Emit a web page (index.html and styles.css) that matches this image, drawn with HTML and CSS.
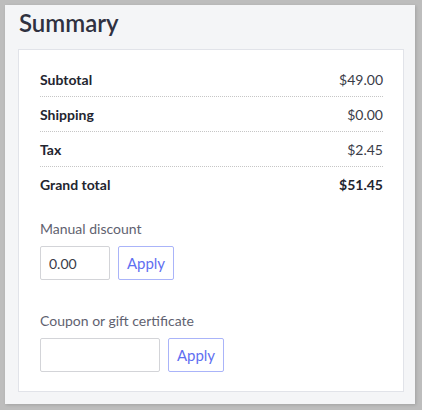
FILE: index.html
```html
<!DOCTYPE html>
<html lang="en">
<head>
<meta charset="utf-8">
<title>Summary</title>
<link rel="stylesheet" href="styles.css">
</head>
<body>
<div class="panel">
  <h1 class="title">Summary</h1>
  <div class="card">
    <div class="row"><span class="label">Subtotal</span><span class="value">$49.00</span></div>
    <div class="row"><span class="label">Shipping</span><span class="value">$0.00</span></div>
    <div class="row"><span class="label">Tax</span><span class="value">$2.45</span></div>
    <div class="row row-total"><span class="label">Grand total</span><span class="value">$51.45</span></div>

    <div class="group group-first">
      <label class="field-label" for="discount">Manual discount</label>
      <div class="field-row">
        <input id="discount" class="input input-short" type="text" value="0.00">
        <button class="btn" type="button">Apply</button>
      </div>
    </div>

    <div class="group group-second">
      <label class="field-label" for="coupon">Coupon or gift certificate</label>
      <div class="field-row">
        <input id="coupon" class="input input-long" type="text" value="">
        <button class="btn" type="button">Apply</button>
      </div>
    </div>
  </div>
</div>
</body>
</html>
```

FILE: styles.css
```css
html, body {
  margin: 0;
  padding: 0;
}

body {
  background: #bdbdbd;
  padding: 5px 7px 6px 5px;
  font-family: Lato, "Noto Sans", "Liberation Sans", sans-serif;
  color: #2a2c36;
}

.panel {
  background: #f4f5f7;
  height: 399px;
  box-sizing: border-box;
  padding: 3px 11px 0 13px;
  box-shadow: 1px 1px 3px rgba(0, 0, 0, 0.15);
}

.title {
  margin: 0 0 0 1px;
  font-size: 24px;
  line-height: 30px;
  font-weight: 600;
  color: #2f3140;
}

.card {
  margin-top: 11px;
  background: #ffffff;
  border: 1px solid #e1e3e9;
  padding: 12px 20px 19px 21px;
}

.row {
  display: flex;
  justify-content: space-between;
  align-items: center;
  height: 35px;
  box-sizing: border-box;
  border-bottom: 1px dotted #c6c6c6;
  font-size: 14px;
}

.row-total {
  border-bottom-color: transparent;
}

.label {
  font-weight: 700;
  color: #23252f;
}

.value {
  color: #3a3c48;
}

.row-total .value {
  font-weight: 700;
  color: #23252f;
}

.group-first {
  margin-top: 17px;
}

.group-second {
  margin-top: 31px;
}

.field-label {
  display: block;
  font-size: 14px;
  line-height: 20px;
  color: #5f6270;
  margin-bottom: 7px;
}

.field-row {
  display: flex;
  gap: 8px;
}

.input {
  box-sizing: border-box;
  height: 34px;
  border: 1px solid #d3d4d8;
  border-radius: 2px;
  padding: 0 8px;
  font-family: inherit;
  font-size: 14px;
  color: #3a3c48;
  background: #ffffff;
  margin: 0;
  outline: none;
}

.input-short {
  width: 70px;
}

.input-long {
  width: 120px;
}

.btn {
  box-sizing: border-box;
  height: 34px;
  width: 56px;
  border: 1px solid #aab4f9;
  border-radius: 2px;
  background: #ffffff;
  color: #5f6ff1;
  font-family: inherit;
  font-size: 15px;
  padding: 0;
  margin: 0;
}
```
